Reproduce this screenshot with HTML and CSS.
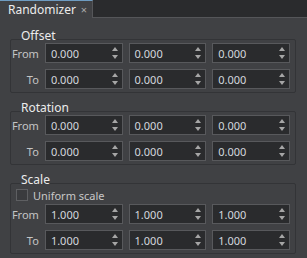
FILE: index.html
```html
<!DOCTYPE html>
<html lang="en">
<head>
    <meta charset="UTF-8">
    <title>Randomizer</title>
    <link rel="stylesheet" href="styles.css">
</head>
<body>
    <div class="tabbar">
        <div class="tab">
            <span class="tab-title">Randomizer</span>
            <span class="tab-close">&times;</span>
        </div>
    </div>

    <div class="panel">
        <div class="group">
            <div class="group-title">Offset</div>
            <div class="frame">
                <div class="row">
                    <span class="label">From</span>
                    <div class="spin"><span class="value">0.000</span><span class="arrows"><i class="up"></i><i class="down"></i></span></div>
                    <div class="spin"><span class="value">0.000</span><span class="arrows"><i class="up"></i><i class="down"></i></span></div>
                    <div class="spin"><span class="value">0.000</span><span class="arrows"><i class="up"></i><i class="down"></i></span></div>
                </div>
                <div class="row">
                    <span class="label">To</span>
                    <div class="spin"><span class="value">0.000</span><span class="arrows"><i class="up"></i><i class="down"></i></span></div>
                    <div class="spin"><span class="value">0.000</span><span class="arrows"><i class="up"></i><i class="down"></i></span></div>
                    <div class="spin"><span class="value">0.000</span><span class="arrows"><i class="up"></i><i class="down"></i></span></div>
                </div>
            </div>
        </div>

        <div class="group">
            <div class="group-title">Rotation</div>
            <div class="frame">
                <div class="row">
                    <span class="label">From</span>
                    <div class="spin"><span class="value">0.000</span><span class="arrows"><i class="up"></i><i class="down"></i></span></div>
                    <div class="spin"><span class="value">0.000</span><span class="arrows"><i class="up"></i><i class="down"></i></span></div>
                    <div class="spin"><span class="value">0.000</span><span class="arrows"><i class="up"></i><i class="down"></i></span></div>
                </div>
                <div class="row">
                    <span class="label">To</span>
                    <div class="spin"><span class="value">0.000</span><span class="arrows"><i class="up"></i><i class="down"></i></span></div>
                    <div class="spin"><span class="value">0.000</span><span class="arrows"><i class="up"></i><i class="down"></i></span></div>
                    <div class="spin"><span class="value">0.000</span><span class="arrows"><i class="up"></i><i class="down"></i></span></div>
                </div>
            </div>
        </div>

        <div class="group">
            <div class="group-title">Scale</div>
            <div class="frame frame-scale">
                <label class="check"><span class="box"></span>Uniform scale</label>
                <div class="row">
                    <span class="label">From</span>
                    <div class="spin"><span class="value">1.000</span><span class="arrows"><i class="up"></i><i class="down"></i></span></div>
                    <div class="spin"><span class="value">1.000</span><span class="arrows"><i class="up"></i><i class="down"></i></span></div>
                    <div class="spin"><span class="value">1.000</span><span class="arrows"><i class="up"></i><i class="down"></i></span></div>
                </div>
                <div class="row">
                    <span class="label">To</span>
                    <div class="spin"><span class="value">1.000</span><span class="arrows"><i class="up"></i><i class="down"></i></span></div>
                    <div class="spin"><span class="value">1.000</span><span class="arrows"><i class="up"></i><i class="down"></i></span></div>
                    <div class="spin"><span class="value">1.000</span><span class="arrows"><i class="up"></i><i class="down"></i></span></div>
                </div>
            </div>
        </div>
    </div>
</body>
</html>
```

FILE: styles.css
```css
* {
    margin: 0;
    padding: 0;
    box-sizing: border-box;
}

body {
    width: 307px;
    height: 258px;
    overflow: hidden;
    background-color: #404144;
    color: #d2d2d2;
    font-family: "Noto Sans", sans-serif;
    font-size: 11px;
}

.tabbar {
    height: 18px;
    background-color: #2a2b2d;
    border-bottom: 1px solid #555659;
    display: flex;
}

.tab {
    width: 93px;
    height: 18px;
    background-color: #404144;
    border-top: 1px solid #6e9cc2;
    border-right: 1px solid #555659;
    display: flex;
    align-items: center;
    justify-content: space-between;
    padding: 0 5px 0 8px;
    color: #ececec;
    font-size: 12px;
}

.tab-close {
    color: #a9a9a9;
    font-size: 11px;
}

.panel {
    padding: 9px 11px 0 10px;
}

.group {
    margin-bottom: 6px;
}

.group-title {
    height: 13px;
    line-height: 13px;
    padding-left: 11px;
    color: #ececec;
    font-size: 12px;
    margin-bottom: -1px;
    position: relative;
    top: 2px;
}

.frame {
    border: 1px solid #333437;
    border-radius: 2px;
    padding: 3px 5px 3px 0;
    display: flex;
    flex-direction: column;
    gap: 6px;
}

.frame-scale {
    padding-top: 5px;
    gap: 3px;
}

.row {
    display: flex;
    align-items: center;
}

.frame-scale .row + .row {
    margin-top: 3px;
}

.label {
    width: 28px;
    text-align: right;
    margin-right: 6px;
    color: #c4c4c4;
}

.spin {
    width: 78px;
    height: 20px;
    margin-right: 6px;
    background-color: #2a2b2d;
    border: 1px solid #58595c;
    display: flex;
    align-items: center;
    justify-content: space-between;
    padding: 0 4px 0 5px;
    color: #d3d8de;
}

.spin:last-child {
    margin-right: 0;
}

.arrows {
    display: flex;
    flex-direction: column;
    justify-content: space-between;
    height: 12px;
}

.arrows i {
    display: block;
    width: 0;
    height: 0;
    border-left: 3.5px solid transparent;
    border-right: 3.5px solid transparent;
}

.arrows .up {
    border-bottom: 4px solid #a6a6a6;
}

.arrows .down {
    border-top: 4px solid #a6a6a6;
}

.check {
    display: flex;
    align-items: center;
    height: 12px;
    padding-left: 5px;
    color: #c8c8c8;
}

.box {
    width: 12px;
    height: 12px;
    border: 1px solid #5e5f62;
    background-color: #3a3b3e;
    margin-right: 5px;
}
```
